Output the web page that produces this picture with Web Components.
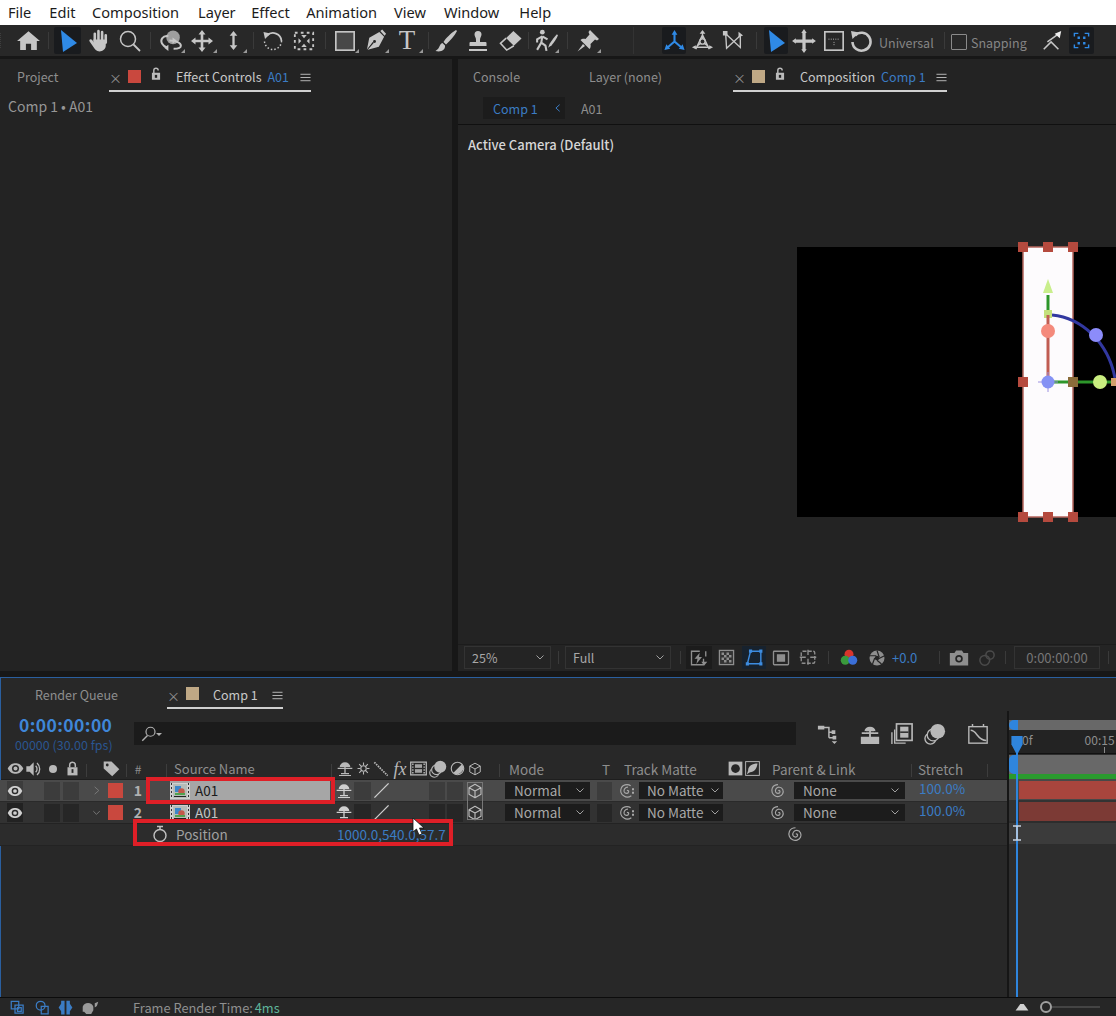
<!DOCTYPE html>
<html>
<head>
<meta charset="utf-8">
<title>Comp 1</title>
<style>
html, body { margin: 0; padding: 0; background: #161616; overflow: hidden; }
</style>
</head>
<body>
<ae-app>
    <ae-menubar>
        <span style="margin-left:8px">File</span><span style="margin-left:18px">Edit</span><span style="margin-left:16.500px">Composition</span><span style="margin-left:19px">Layer</span><span style="margin-left:15.500px">Effect</span><span style="margin-left:16.400px">Animation</span><span style="margin-left:17px">View</span><span style="margin-left:18px">Window</span><span style="margin-left:20px">Help</span>
    </ae-menubar>
    <ae-toolbar></ae-toolbar>
    <ae-workspace>
        <ae-effect-panel slot="left"></ae-effect-panel>
        <ae-comp-panel slot="right"></ae-comp-panel>
    </ae-workspace>
    <ae-timeline></ae-timeline>
    <ae-statusbar></ae-statusbar>
</ae-app>

<script>
const FONT = '"Noto Sans CJK KR", "Noto Sans", sans-serif'
const BLUE = '#3b7cc4'

const ICONS = {
    grip: '<path d="M2 4v16M5 4v16" stroke="currentColor" stroke-width="1" stroke-dasharray="1 1" fill="none"/>',
    home: '<path fill="currentColor" d="M12 3 23 12.5H20V21H14.5V15H9.5V21H4V12.5H1Z"/>',
    arrow: '<path fill="currentColor" d="M5 1 21 14 7 23Z"/>',
    hand: '<path fill="currentColor" d="M6 11h12v6c0 3-3 5.500-6 5.500-3 0-4.500-2-6-4.500L2.500 13c-1-2 1-3 2.500-1.500L6.500 14Z"/><path stroke="currentColor" stroke-width="2.500" stroke-linecap="round" fill="none" d="M7.500 13V5.500M11 12V3M14.500 12V4M18 14V7"/>',
    zoom: '<circle cx="10" cy="10" r="7.500" stroke="currentColor" stroke-width="1.500" fill="none"/><path stroke="currentColor" stroke-width="1.800" d="M15.500 15.500 22 22"/>',
    orbit: '<circle cx="13.500" cy="9" r="6.500" fill="currentColor" opacity=".75"/><path stroke="currentColor" stroke-width="1.900" fill="none" d="M8 19C3 17 1 13 3 10 4.500 8 7 7.500 9 8M10 12c5 0 11 2 11 5 0 2-3 3-7 3"/><path fill="currentColor" d="M9 16v6l-4-3zM13 9v6l4-3z"/>',
    move: '<path fill="currentColor" d="M12 1 15.500 5.500H13.300V10.700H18.500V8.500L23 12 18.500 15.500V13.300H13.300V18.500H15.500L12 23 8.500 18.500H10.700V13.300H5.500V15.500L1 12 5.500 8.500V10.700H10.700V5.500H8.500Z"/>',
    dolly: '<path fill="currentColor" d="M12 2 16 7H13.200V17H16L12 22 8 17H10.800V7H8Z"/>',
    rotate: '<path stroke="currentColor" stroke-width="1.800" fill="none" d="M6 6.500A8.500 8.500 0 0 1 20.500 12"/><path stroke="currentColor" stroke-width="1.500" stroke-dasharray="1.500 2" fill="none" d="M20.500 12A8.500 8.500 0 0 1 3.500 12"/><path fill="currentColor" d="M2.500 3 9.500 4.500 4 10Z"/>',
    anchor: '<path stroke="currentColor" stroke-width="2" stroke-dasharray="3 3.500" fill="none" d="M2 3H22V21H2Z"/><path fill="currentColor" d="M12 9 9 5.500H15ZM12 15 9 18.500H15ZM9 12 6 9V15ZM15 12 18 9V15Z"/>',
    rect: '<rect x="2" y="2" width="20" height="20" fill="#484848" stroke="currentColor" stroke-width="1.800"/>',
    pen: '<path fill="currentColor" d="M16 3 21 8 15.500 18.500 3 22 5.500 9ZM3 22 10 14.500 9 13.500Z"/><circle cx="11" cy="13" r="1.500" fill="#262626"/><path stroke="#262626" d="M3 22 10 14"/><path fill="currentColor" d="M17 2 19 .5 23 5 21.500 7Z"/>',
    brush: '<path fill="currentColor" d="M22 1C17 4 12 9 9.500 13L12 15.500C16 12 20.500 7 23 2ZM8.500 14C5 15 6.500 19 1.500 22 7 23.500 11.500 21 11 16.500Z"/>',
    stamp: '<path fill="currentColor" d="M12 2a3.500 3.500 0 0 1 3.500 3.500c0 2-1.500 3-1.500 5.500v2h5.500a1 1 0 0 1 1 1v3H3.500v-3a1 1 0 0 1 1-1H10v-2c0-2.500-1.500-3.500-1.500-5.500A3.500 3.500 0 0 1 12 2ZM3 20H21V22H3Z"/>',
    eraser: '<path fill="currentColor" d="M15 2 23.500 10 15.500 17.500 7.500 9.500Z"/><path stroke="currentColor" stroke-width="1.600" fill="none" d="M7.500 9.500 1.500 15 8 22 15.500 17.500"/>',
    roto: '<circle cx="8" cy="4" r="2.300" fill="currentColor"/><path stroke="currentColor" stroke-width="2" fill="none" d="M8 8 7 14 3 21M7 14l4 3 1 5M8 8 3 11V14M8 8 13 11"/><path fill="currentColor" d="M22 6C20 8 17 12 15 15L13.500 19 17 16.500C19 14 22 10 23 7Z"/>',
    pin: '<path fill="currentColor" d="M14 1 23 10 21 11.500 19 10.500 14.500 15C15 17.500 14.500 19 13.500 20L4.500 11C5.500 10 7.500 9.500 9.500 10L13.500 5.500 12.500 3Z"/><path fill="currentColor" d="M7 15 1.500 22.500 9 17Z"/>',
    axisL: '<path stroke="currentColor" stroke-width="2.200" fill="none" d="M12 13V5M12 13 5 19M12 13 19 19"/><path fill="currentColor" d="M12 1 15 6H9ZM1.500 22 3.500 16 7.500 20.500ZM22.500 22 20.500 16 16.500 20.500Z"/>',
    axisW: '<path stroke="currentColor" stroke-width="1.400" fill="none" d="M12 4V10M4 19H20M10 15 6 18M14 15 18 18M5 21 12 6 19 21"/><circle cx="12" cy="13" r="2.800" fill="none" stroke="currentColor" stroke-width="1.500"/><path fill="currentColor" d="M12 1 15 5H9ZM1 19 5 17V21ZM23 19 19 17V21Z"/>',
    axisV: '<path stroke="currentColor" stroke-width="1.500" fill="none" d="M4 4 20 19V6L5 20 4 4"/><path fill="currentColor" d="M1 1H6V6H1ZM18 2 23 6 18 8Z"/>',
    plus: '<path fill="currentColor" d="M12 1 14.500 4.500H13.500V10.500H19.500V9.500L23 12 19.500 14.500V13.500H13.500V19.500H14.500L12 23 9.500 19.500H10.500V13.500H4.500V14.500L1 12 4.500 9.500V10.500H10.500V4.500H9.500Z"/>',
    box: '<rect x="2" y="2" width="20" height="20" fill="none" stroke="currentColor" stroke-width="1.800"/><path stroke="currentColor" stroke-dasharray="1 1.500" fill="none" d="M6 10H18M12 13V18"/>',
    rotate2: '<path stroke="currentColor" stroke-width="2.600" fill="none" d="M6 6.500A9 9 0 1 1 3.500 13"/><path fill="currentColor" d="M2 2 10 3.500 3.500 10Z"/>',
    snap: '<path stroke="currentColor" stroke-width="1.700" fill="none" d="M3 21 11 13 19 21M7 13 18 5"/><path fill="#eee" d="M22 1 20.500 9 15 4Z"/>',
    focus: '<path stroke="currentColor" stroke-width="1.800" fill="none" d="M3 7V3H8M16 3H21V7M21 17V21H16M8 21H3V17"/><path fill="currentColor" d="M7 7h3v3H7zM14 7h3v3h-3zM7 14h3v3H7zM14 14h3v3h-3z"/>',
    lock: '<path fill="currentColor" d="M5 10H19V22H5ZM7 10V6a5 5 0 0 1 10 0H14.500a2.500 2.500 0 0 0-5 0v4Z"/><rect x="10" y="13.500" width="4" height="5" fill="#232323"/>',
    menu: '<path stroke="currentColor" stroke-width="2" d="M1 5H23M1 12H23M1 19H23"/>',
    chev: '<path stroke="currentColor" stroke-width="2" fill="none" d="M5 9 12 16 19 9"/>',
    chevR: '<path stroke="currentColor" stroke-width="2" fill="none" d="M8 4 17 12 8 20"/>',
    chevL: '<path stroke="currentColor" stroke-width="2.400" fill="none" d="M16 4 7 12 16 20"/>',
    fast: '<path stroke="currentColor" stroke-width="1.800" fill="none" d="M13 3H2V21H18V13M21 3V10"/><path fill="currentColor" d="M13 5 6 13H10L8.500 20 16 10.500H12ZM15 17H23L19 22Z"/>',
    grid: '<rect x="2" y="2" width="20" height="20" fill="#333" stroke="currentColor" stroke-width="1.800"/><path fill="currentColor" d="M5 5h3.500v3.500H5zM12 5h3.500v3.500H12zM8.500 8.500H12V12H8.500zM15.500 8.500H19V12h-3.500zM5 12h3.500v3.500H5zM12 12h3.500v3.500H12zM8.500 15.500H12V19H8.500zM15.500 15.500H19V19h-3.500z"/>',
    mask: '<path stroke="currentColor" stroke-width="1.800" fill="none" d="M7 4H20V20H3Z"/><path fill="currentColor" d="M5 2h4v4H5zM18 2h4v4h-4zM18 18h4v4h-4zM1 18h4v4H1z"/>',
    safe: '<rect x="2" y="3" width="20" height="18" rx="1" fill="none" stroke="currentColor" stroke-width="1.800"/><rect x="6.500" y="7" width="11" height="10" fill="currentColor"/>',
    guides: '<rect x="3" y="3" width="18" height="16" rx="2" fill="none" stroke="currentColor" stroke-width="1.800" stroke-dasharray="5 2"/><path stroke="currentColor" stroke-width="1.800" d="M12 1V8M12 13V21M1 11H9M15 11H23"/>',
    channels: '<circle cx="12" cy="7" r="6" fill="#d8352c"/><circle cx="7" cy="15" r="6" fill="#3a9a3c"/><circle cx="17" cy="15" r="6" fill="#3b6fd8"/>',
    aperture: '<circle cx="12" cy="12" r="10" fill="currentColor"/><path stroke="#242424" stroke-width="1.600" fill="none" d="M12 2 15 11M22 9 14 13M18 20 12 15M6 20 9 12M2 9 11 9"/><circle cx="12" cy="12" r="3" fill="#242424"/>',
    camera: '<path fill="currentColor" d="M1 6H6.500L8.500 3H15.500L17.500 6H23V21H1Z"/><circle cx="12" cy="13" r="4.500" fill="#242424"/><circle cx="12" cy="13" r="2.500" fill="currentColor"/>',
    snapshot: '<circle cx="9" cy="15" r="6.500" fill="none" stroke="currentColor" stroke-width="2"/><circle cx="16" cy="8" r="5.500" fill="none" stroke="currentColor" stroke-width="2"/>',
    search: '<circle cx="14" cy="9" r="6" fill="none" stroke="currentColor" stroke-width="1.600"/><path stroke="currentColor" stroke-width="1.800" d="M10 14 3 21"/>',
    flow: '<path stroke="currentColor" stroke-width="1.600" fill="none" d="M7 5H13V16M13 10H17M13 16H18"/><path fill="currentColor" d="M1 3H8V7H1ZM16 8H20V12H16ZM17 14H21V18H17ZM16 20H22L19 23Z"/>',
    shyBig: '<path fill="currentColor" d="M6 9a6 5 0 0 1 12 0ZM3 10H21V12H3ZM11 5H13V15H11ZM2 15H22V23H2Z"/><path stroke="#282828" d="M7 9V10M17 9V10"/>',
    shySmall: '<path fill="currentColor" d="M4 9a8 7 0 0 1 16 0ZM1 10H23V12H1ZM11 3H13V19H11ZM6 18H18V20H6Z"/><path fill="currentColor" d="M3 21H21V22.500H3Z"/>',
    film: '<rect x="1" y="3" width="22" height="18" fill="none" stroke="currentColor" stroke-width="1.800"/><rect x="7" y="6" width="10" height="12" fill="currentColor" opacity=".85"/><path stroke="currentColor" stroke-width="2" stroke-dasharray="2 2" d="M4 5V19M20 5V19"/><path stroke="#282828" stroke-width="1.800" d="M7 12H17"/>',
    filmStack: '<path stroke="currentColor" stroke-width="1.500" fill="none" d="M4 7V22H16M1 10V23"/><rect x="6" y="1" width="17" height="18" fill="none" stroke="currentColor" stroke-width="1.800"/><rect x="10" y="4" width="9" height="12" fill="currentColor"/><path stroke="#282828" stroke-width="1.600" d="M10 10H19"/>',
    blur: '<circle cx="7" cy="17" r="6" fill="none" stroke="currentColor" stroke-width="1.500"/><circle cx="10" cy="13" r="6.500" fill="#282828" stroke="currentColor" stroke-width="1.500"/><circle cx="15" cy="9" r="8" fill="currentColor"/>',
    graph: '<rect x="2" y="4" width="20" height="18" fill="none" stroke="currentColor" stroke-width="1.500"/><path stroke="currentColor" stroke-width="1.600" fill="none" d="M4 8C11 8 11 19 21 19M6 1V4M18 1V4"/>',
    eye: '<path fill="currentColor" d="M1 12C4 6 8 4.500 12 4.500S20 6 23 12C20 18 16 19.500 12 19.500S4 18 1 12Z"/><circle cx="12" cy="12" r="5" fill="#2a2a2a"/><circle cx="12" cy="12" r="2.800" fill="currentColor"/>',
    speaker: '<path fill="currentColor" d="M2 8H7L13 2V22L7 16H2Z"/><path stroke="currentColor" stroke-width="2" fill="none" d="M16 7a7 7 0 0 1 0 10M18 3a12 12 0 0 1 0 18"/>',
    dot: '<circle cx="12" cy="12" r="8" fill="currentColor"/>',
    lockH: '<path fill="currentColor" d="M4 10H20V23H4Z"/><path stroke="currentColor" stroke-width="2.400" fill="none" d="M7.500 10V6.500a4.500 4.500 0 0 1 9 0V10"/><rect x="10.500" y="13" width="3" height="6" fill="#282828"/>',
    tag: '<path fill="currentColor" d="M1 2H12L23 13 13 23 1 12Z"/><circle cx="6" cy="7" r="2" fill="#282828"/>',
    sun: '<circle cx="12" cy="12" r="5" fill="none" stroke="currentColor" stroke-width="2"/><path stroke="currentColor" stroke-width="2" d="M12 1V6M12 18V23M1 12H6M18 12H23M4 4 8 8M16 16 20 20M20 4 16 8M8 16 4 20"/>',
    dots: '<path stroke="currentColor" stroke-width="2.600" stroke-dasharray="2.400 1.400" d="M2 2 22 22"/>',
    half: '<circle cx="12" cy="12" r="10" fill="none" stroke="currentColor" stroke-width="1.800"/><path fill="currentColor" d="M19 5A10 10 0 0 1 5 19Z"/>',
    cube: '<path stroke="currentColor" stroke-width="1.700" fill="none" stroke-linejoin="round" d="M12 2 21 7V17L12 22 3 17V7ZM3 7 12 12 21 7M12 12V22"/>',
    slash: '<path stroke="currentColor" stroke-width="1.800" d="M2 22 22 2"/>',
    spiral: '<path stroke="currentColor" stroke-width="1.700" fill="none" d="M12.500 11.500c1.500-1 3 .5 2.300 2.300-1 2.400-5 2.400-6.300-.3C7 10 10 6 14 6.300c5 .4 7 5.500 5 9.700-2 4-7 5.500-11 3.500C3.500 17.500 1.500 12 3.500 7.500 5 4 8.500 2.500 12 2.500"/>',
    spiralDot: '<path stroke="currentColor" stroke-width="1.700" fill="none" d="M10.500 11.500c1.500-1 3 .5 2.300 2.300-1 2.400-5 2.400-6.300-.3C5 10 8 6 12 6.300M17 19c-3 2-8 2.500-11 .5C1.500 17.500 0 12 2 7.500 3.500 4 7 2.500 10.500 2.500c2 0 4 .5 5.500 1.500"/><path fill="currentColor" d="M18 8h3v3h-3zM18 13h3v3h-3z"/>',
    watch: '<circle cx="12" cy="14" r="8" fill="none" stroke="currentColor" stroke-width="1.900"/><path stroke="currentColor" stroke-width="2" d="M8 2H16M12 2V6"/>',
    maskBtn: '<rect x="1" y="1" width="22" height="22" fill="currentColor"/><circle cx="12" cy="12" r="7" fill="#262626"/>',
    leafBtn: '<rect x="1" y="1" width="22" height="22" fill="none" stroke="currentColor" stroke-width="1.500"/><path fill="currentColor" d="M20 4C12 4 5 8 5 15L3 21 8 18C15 18 19 12 20 4Z"/>',
    comps: '<path stroke="currentColor" stroke-width="2" fill="none" d="M2 2H14V14H2ZM8 8H21V21H8ZM12 12H18V18H12Z"/>',
    modes: '<circle cx="9" cy="9" r="7" fill="none" stroke="currentColor" stroke-width="2"/><path stroke="currentColor" stroke-width="2" fill="none" d="M10 10H21V22H10Z"/>',
    inout: '<path fill="currentColor" d="M10.500 1H5V6L1 12 5 18V23H10.500ZM13.500 1H19V6L23 12 19 18V23H13.500Z"/>',
    guy: '<path fill="currentColor" d="M1 11a8 8 0 0 1 15 0v5l-3 5H6L3 18H1ZM18 6l5-2-2 6-3 2Z"/>',
    mountain: '<path fill="currentColor" d="M1 18 9 7H15L23 18Z"/>'
}

// lays items out from left to right: each item is [from, to, html, class]
function strip(items, start = 0) {
    let x = start
    return items.map(([a, b, html, cls]) => {
        let s = `margin-left:${a - x}px;width:${b - a}px`
        x = b
        return `<span class="c ${cls || ''}" style="${s}">${html || ''}</span>`
    }).join('')
}
function ic(name, size = 20, color = '') {
    return `<ae-icon name="${name}" size="${size}" ${color ? `style="color:${color}"` : ''}></ae-icon>`
}
const BASE = `
    :host { display: block; box-sizing: border-box; font-family: ${FONT}; }
    .strip { display: flex; align-items: stretch; }
    .c { display: flex; flex: none; align-items: center; justify-content: center; white-space: nowrap; }
    .l { justify-content: flex-start; }
    .sep::after { content: ''; width: 1px; height: 60%; background: #3a3a3a; }
`

class AeElement extends HTMLElement {
    paint(css, html) {
        let root = this.shadowRoot || this.attachShadow({mode: 'open'})
        root.innerHTML = `<style>${BASE}${css}</style>${html}`
    }
}

class AeIcon extends HTMLElement {
    connectedCallback() {
        let size = this.getAttribute('size') || 20
        let root = this.attachShadow({mode: 'open'})
        root.innerHTML = `<style>:host{display:inline-flex;flex:none;line-height:0} svg{display:block}</style>
            <svg width="${size}" height="${size}" viewBox="0 0 24 24">${ICONS[this.getAttribute('name')] || ''}</svg>`
    }
}
customElements.define('ae-icon', AeIcon)

class AeApp extends AeElement {
    connectedCallback() {
        this.paint(`:host { width: 1116px; height: 1016px; display: flex; flex-direction: column; overflow: hidden; position: relative; }`, `<slot></slot>`)
    }
}
customElements.define('ae-app', AeApp)

class AeMenubar extends AeElement {
    connectedCallback() {
        this.paint(`
            :host { height: 25px; padding-bottom: 2px; background: #fff; color: #1c1c1c; font-family: "Noto Sans", sans-serif; font-size: 14.600px; display: flex; align-items: center; white-space: nowrap; flex: none; }
        `, `<slot></slot>`)
    }
}
customElements.define('ae-menubar', AeMenubar)

class AeToolbar extends AeElement {
    connectedCallback() {
        const C = '#c6c6c6'
        let t = (a, b, name, size, cls) => [a, b, ic(name, size), cls]
        let items = [
            t(0, 14, 'grip', 24, 'dim'),
            t(14, 42, 'home', 25),
            [42, 54, '', 'sep'],
            t(54, 81, 'arrow', 24, 'on'),
            t(83, 115, 'hand', 25),
            t(115, 145, 'zoom', 24),
            [145, 156, '', 'sep'],
            t(156, 186, 'orbit', 25, 'fly'),
            t(186, 218, 'move', 24, 'fly'),
            t(218, 248, 'dolly', 23, 'fly'),
            [248, 258, '', 'sep'],
            t(258, 288, 'rotate', 24),
            t(288, 320, 'anchor', 22),
            [320, 330, '', 'sep'],
            t(330, 360, 'rect', 22, 'fly'),
            t(360, 390, 'pen', 23, 'fly'),
            [390, 424, 'T', 'tee fly'],
            [424, 432, '', 'sep'],
            t(432, 460, 'brush', 24),
            t(460, 496, 'stamp', 24),
            t(496, 524, 'eraser', 23),
            [524, 532, '', 'sep'],
            t(532, 560, 'roto', 25, 'fly'),
            [560, 574, '', 'sep'],
            t(574, 602, 'pin', 24, 'fly'),
            [602, 662, '', 'far'],
            t(662, 686, 'axisL', 23, 'on'),
            t(686, 718, 'axisW', 23),
            t(718, 748, 'axisV', 22),
            [748, 764, '', 'sep'],
            t(764, 788, 'arrow', 24, 'on'),
            t(788, 820, 'plus', 26),
            t(820, 847, 'box', 22),
            t(847, 875, 'rotate2', 24),
            [875, 941, 'Universal', 'l word'],
            [941, 948, '', 'sep'],
            [950, 967, '<i class="check"></i>'],
            [971, 1034, 'Snapping', 'l word2'],
            t(1034, 1069, 'snap', 22),
            t(1069, 1094, 'focus', 19, 'on')
        ]
        this.paint(`
            :host { height: 31px; background: #282828; color: ${C}; flex: none; }
            .strip { height: 31px; padding-top: 2px; box-sizing: border-box; padding-bottom: 2px; }
            .on { background: #191b1e; color: #2f8ae6; border-radius: 2px; }
            .dim { color: #555; }
            .far { justify-content: flex-end; }
            .far::after { content: ''; width: 1px; height: 100%; background: #333; margin-right: 28px; }
            .fly { position: relative; }
            .fly::before { content: ''; position: absolute; right: 1px; bottom: 1px; border: 2px solid transparent; border-right-color: #999; border-bottom-color: #999; }
            .tee { font-family: "Liberation Serif", serif; font-size: 27px; }
            .word, .word2 { font-size: 12.500px; color: #858585; padding-top: 3px; box-sizing: border-box; }
            .word { padding-left: 4px; }
            .check { width: 16px; height: 16px; border: 1.500px solid #8a8a8a; border-radius: 1px; display: block; margin-top: 2px; box-sizing: border-box; }
        `, `<div class="strip">${strip(items)}</div>`)
    }
}
customElements.define('ae-toolbar', AeToolbar)

class AeWorkspace extends AeElement {
    connectedCallback() {
        this.paint(`
            :host { display: flex; height: 621px; padding: 3px 0 6px; background: #171717; flex: none; }
            .left { width: 452px; flex: none; display: flex; margin-right: 6px; }
            .right { flex: 1; display: flex; min-width: 0; }
            ::slotted(*) { flex: 1; min-width: 0; }
        `, `<div class="left"><slot name="left"></slot></div><div class="right"><slot name="right"></slot></div>`)
    }
}
customElements.define('ae-workspace', AeWorkspace)

// the active tab of a panel: close button, label colour, lock, title, underline
class AeTab extends AeElement {
    connectedCallback() {
        let swatch = this.getAttribute('swatch')
        let lock = this.hasAttribute('lock')
        let sub = this.getAttribute('sub')
        this.paint(`
            :host { display: flex; flex: none; width: ${this.getAttribute('w')}px; height: 33px; box-sizing: border-box; padding-top: 6px; align-items: flex-start; border-bottom: 2px solid #d0d0d0; font-size: 12.500px; color: #c8c8c8; white-space: nowrap; }
            .head { display: flex; align-items: center; flex: none; height: 24px; width: ${this.getAttribute('head')}px; }
            .x { width: 10px; text-align: center; color: #909090; font-size: 13px; margin-left: 0; }
            .sw { width: 13px; height: 13px; margin: var(--sw-top, -1px) 0 0 9px; }
            .lk { margin: -4px 0 0 8px; color: #bbb; }
            .txt { line-height: 24px; }
            .sub { color: ${BLUE}; margin-left: 6px; line-height: 24px; }
            .m { margin-left: auto; height: 24px; display: flex; align-items: center; color: #c0c0c0; }
        `, `<div class="head"><span class="x">×</span><span class="sw" style="background:${swatch}"></span>${lock ? `<span class="lk">${ic('lock', 14)}</span>` : ''}</div>
            <span class="txt"><slot></slot></span>${sub ? `<span class="sub">${sub}</span>` : ''}<span class="m">${ic('menu', 11)}</span>`)
    }
}
customElements.define('ae-tab', AeTab)

class AeEffectPanel extends AeElement {
    connectedCallback() {
        this.paint(`
            :host { background: #232323; display: flex; flex-direction: column; }
            .tabs { display: flex; height: 33px; font-size: 12.500px; color: #8e8e8e; flex: none; }
            .project { width: 109px; padding: 8px 0 0 17px; box-sizing: border-box; }
            .crumb { font-size: 14px; color: #969696; padding: 4px 0 0 8px; }
        `, `<div class="tabs"><span class="project">Project</span><ae-tab w="202" head="67" swatch="#c9483e" lock sub="A01">Effect Controls</ae-tab></div>
            <div class="crumb">Comp 1 • A01</div>`)
    }
}
customElements.define('ae-effect-panel', AeEffectPanel)

// the composition with the transform gizmo drawn in screen coordinates
class AeCompStage extends AeElement {
    connectedCallback() {
        let handles = [[1023, 247], [1048, 247], [1073, 247], [1023, 382], [1023, 517], [1048, 517], [1073, 517]]
            .map(([x, y]) => `<rect x="${x - 5}" y="${y - 5}" width="10" height="10" fill="#b54a3e"/>`).join('')
        this.paint(`
            :host { width: 319px; height: 270px; background: #000; flex: none; position: relative; }
            svg { position: absolute; left: 0; top: 0; overflow: visible; }
        `, `<svg width="319" height="270" viewBox="797 247 319 270">
            <rect x="1023" y="247" width="50" height="270" fill="#fdfbfd" stroke="#b5655c" stroke-width="1.500"/>
            ${handles}
            <path d="M1052 315C1082 318 1108 342 1115 378" stroke="#3238a0" stroke-width="3" fill="none"/>
            <path d="M1048 295V313" stroke="#2d962a" stroke-width="3"/>
            <path d="M1048 279 1053 293H1043Z" fill="#c9ee8c"/>
            <rect x="1044" y="310" width="8" height="8" fill="#c4e07c"/>
            <path d="M1048 315V377" stroke="#c05c52" stroke-width="3"/>
            <circle cx="1048" cy="331" r="7" fill="#f48a7c"/>
            <circle cx="1096" cy="335" r="7" fill="#8c8cfa"/>
            <path d="M1050 382H1116" stroke="#2d962a" stroke-width="3"/>
            <rect x="1068" y="377" width="10" height="10" fill="#8a6c3a"/>
            <rect x="1111" y="378" width="5" height="8" fill="#d4a06c"/>
            <path d="M1038 382H1058M1048 372V392" stroke="#9c90e0" stroke-width="1"/>
            <circle cx="1048" cy="382" r="6.500" fill="#8592f4"/>
            <circle cx="1100" cy="382" r="7" fill="#c9ee80"/>
        </svg>`)
    }
}
customElements.define('ae-comp-stage', AeCompStage)

class AeSelect extends AeElement {
    connectedCallback() {
        this.paint(`
            :host { display: flex; align-items: center; justify-content: space-between; box-sizing: border-box; height: 100%; background: var(--select-bg, #1c1c1c); padding: 0 var(--select-pr, 4px) var(--select-pb, 0) var(--select-pl, 9px); border: var(--select-border, none); color: #a8a8a8; font-size: var(--select-size, 13.500px); white-space: nowrap; width: 100%; }
        `, `<slot></slot>${ic('chev', 12, '#a0a0a0')}`)
    }
}
customElements.define('ae-select', AeSelect)

class AeCompPanel extends AeElement {
    connectedCallback() {
        let o = 458
        let foot = [
            [464 - o, 551 - o, '<ae-select class="sel">25%</ae-select>', 'box'],
            [555 - o, 561 - o, '', 'sep'],
            [565 - o, 671 - o, '<ae-select class="sel">Full</ae-select>', 'box'],
            [675 - o, 685 - o, '', 'sep'],
            [686 - o, 712 - o, ic('fast', 18), 'press'],
            [713 - o, 739 - o, ic('grid', 17)],
            [742 - o, 766 - o, ic('mask', 19, '#3d8ce0'), 'blue'],
            [768 - o, 794 - o, ic('safe', 18)],
            [795 - o, 821 - o, ic('guides', 18)],
            [822 - o, 834 - o, '', 'sep'],
            [836 - o, 861 - o, ic('channels', 18)],
            [864 - o, 890 - o, ic('aperture', 18)],
            [892 - o, 934 - o, '+0.0', 'l exp'],
            [934 - o, 944 - o, '', 'sep'],
            [946 - o, 972 - o, ic('camera', 20)],
            [975 - o, 999 - o, ic('snapshot', 18, '#4a4a4a')],
            [1000 - o, 1010 - o, '', 'sep'],
            [1014 - o, 1100 - o, '0:00:00:00', 'time'],
            [1105 - o, 1111 - o, '', 'sep']
        ]
        this.paint(`
            :host { background: #232323; display: flex; flex-direction: column; overflow: hidden; color: #8e8e8e; }
            .tabs { display: flex; height: 33px; font-size: 12.500px; flex: none; }
            .tabs span { padding: 8px 0 0 0; box-sizing: border-box; }
            .subtabs { display: flex; height: 32px; flex: none; align-items: center; border-bottom: 1px solid #101010; box-sizing: content-box; font-size: 12.500px; }
            .crumb-on { margin-left: 25px; width: 82px; height: 22px; background: #1c1c1c; color: ${BLUE}; display: flex; align-items: center; justify-content: space-between; padding: 0 2px 0 10px; box-sizing: border-box; }
            .crumb { margin-left: 16px; }
            .viewer { flex: 1; min-height: 0; font-size: 13px; color: #d6d6d6; }
            .label { height: 122px; padding: 10px 0 0 10px; box-sizing: border-box; font-weight: 500; }
            .stage { margin-left: 339px; }
            .foot { height: 27px; flex: none; background: #242424; padding-top: 1px; padding-bottom: 3px; box-sizing: border-box; border-top: 1px solid #1c1c1c; }
            .foot .c { height: 23px; }
            .box { --select-bg: #242424; --select-border: 1px solid #333; --select-size: 12.500px; --select-pl: 7px; --select-pb: 1px; }
            .sel { width: 100%; }
            .press { background: #1c1c1c; }
            .blue { background: #17222e; }
            .exp { color: ${BLUE}; font-size: 13px; }
            .time { border: 1px solid #333; box-sizing: border-box; color: #767676; font-size: 13px; }
        `, `<div class="tabs"><span style="margin-left:15px;width:116px">Console</span><span style="width:144px">Layer (none)</span><ae-tab w="214" head="67" swatch="#bfa885" lock sub="Comp 1">Composition</ae-tab></div>
            <div class="subtabs"><div class="crumb-on">Comp 1 ${ic('chevL', 10, BLUE)}</div><div class="crumb">A01</div></div>
            <div class="viewer"><div class="label">Active Camera (Default)</div><ae-comp-stage class="stage"></ae-comp-stage></div>
            <div class="foot strip">${strip(foot)}</div>`)
    }
}
customElements.define('ae-comp-panel', AeCompPanel)

// one row of the layer outline
class AeLayerRow extends AeElement {
    connectedCallback() {
        let n = this.getAttribute('num')
        let sel = this.hasAttribute('selected')
        let dark = '#' + (sel ? '3c3c3c' : '262626')
        let sq = `<i class="sq" style="background:${dark}"></i>`
        let footage = `<svg class="foot" width="20" height="16" viewBox="0 0 20 16"><rect width="20" height="16" fill="#cfcfcf"/><path stroke="#333" stroke-dasharray="2 2" d="M1.500 0V16M18.500 0V16"/><rect x="3" y="1" width="14" height="14" fill="#b5bcb8"/><path d="M5 3H11V9H5Z" fill="#3c86c8"/><circle cx="11.500" cy="8.500" r="3.200" fill="#c4594a"/><path d="M5 10H15V12H5Z" fill="#4fa34f"/><path d="M4 13.500H16" stroke="#222"/></svg>`
        let items = [
            [7, 23, ic('eye', 16, '#cfcfcf'), 'eye'],
            [44, 60, sq], [63, 79, sq],
            [88, 104, ic(sel ? 'chevR' : 'chev', 11, '#7c7c7c')],
            [108, 123, '<i class="swatch"></i>'],
            [130, 146, n, 'num'],
            [150, 330, `<span class="pre"></span>${footage}<span class="nm">A01</span>`, 'l name'],
            [336, 352, ic('shySmall', 16, '#cfcfcf')],
            [354, 371, sq],
            [372, 390, ic('slash', 17, '#cfcfcf'), 'sw'],
            [429, 445, sq], [447, 463, sq],
            [467, 483, ic('cube', 16, '#bdbdbd')],
            [505, 590, '<ae-select>Normal</ae-select>', 'fill'],
            [597, 612, sq],
            [618, 637, ic('spiralDot', 16, '#a8a8a8')],
            [639, 723, '<ae-select class="nm2">No Matte</ae-select>', 'fill'],
            [770, 786, ic('spiral', 16, '#a8a8a8')],
            [794, 905, '<ae-select>None</ae-select>', 'fill'],
            [919, 975, '100.0%', 'l pct']
        ]
        this.paint(`
            :host { height: 22px; background: ${sel ? '#4a4a4a' : '#323232'}; border-bottom: 1px solid ${sel ? '#2a2a2a' : '#232323'}; box-sizing: border-box; color: #bdbdbd; font-size: 14px; }
            .strip { height: 21px; }
            .c { height: 21px; }
            .eye { background: ${sel ? '#3c3c3c' : '#222'}; height: 19px; margin-top: 1px; }
            .sq { width: 100%; height: 18px; display: block; }
            .swatch { width: 15px; height: 15px; background: #c9483e; display: block; }
            .num { font-weight: 700; color: #b0b0b0; padding-bottom: 2px; box-sizing: border-box; }
            .name { background: ${sel ? '#a6a6a6' : 'transparent'}; height: 19px; margin-top: 1px; color: #1a1a1a; }
            .pre { width: 20px; height: 100%; background: ${sel ? '#4a4a4a' : 'transparent'}; flex: none; }
            .foot { flex: none; }
            .nm { margin-left: 5px; font-size: 13.500px; padding-bottom: 2px; ${sel ? '' : 'color:#c4c4c4;'} }
            .fill { height: 17px; margin-top: 2px; --select-pb: 2px; }
            .nm2 { --select-pl: 8px; --select-pr: 2px; }
            .pct { color: ${BLUE}; font-size: 13.500px; padding-bottom: 5px; box-sizing: border-box; }
        `, `<div class="strip">${strip(items)}</div>`)
    }
}
customElements.define('ae-layer-row', AeLayerRow)

class AeTimeline extends AeElement {
    connectedCallback() {
        let tools = [
            [134, 796, `<span style="margin-left:6px;display:flex;align-items:center">${ic('search', 18, '#b0b0b0')}<i class="drop"></i></span>`, 'l search'],
            [815, 840, ic('flow', 22)],
            [858, 882, ic('shyBig', 22)],
            [890, 914, ic('filmStack', 22)],
            [923, 947, ic('blur', 22)],
            [966, 990, ic('graph', 22)]
        ]
        let hi = (name, size, color) => ic(name, size, color || '#b8b8b8')
        let head = [
            [7, 23, hi('eye', 17)],
            [25, 41, hi('speaker', 16)],
            [45, 61, hi('dot', 12)],
            [64, 80, hi('lockH', 15)],
            [85, 87, '', 'bar'],
            [102, 120, hi('tag', 17)],
            [125, 127, '', 'bar'],
            [132, 144, '#', 'hash'],
            [165, 167, '', 'bar'],
            [174, 328, 'Source Name', 'l src'],
            [330, 332, '', 'bar'],
            [336, 353, hi('shySmall', 16)],
            [355, 371, hi('sun', 13)],
            [373, 389, hi('dots', 16)],
            [391, 409, '<i class="fx">fx</i>'],
            [410, 427, hi('film', 17)],
            [428, 448, hi('blur', 18)],
            [449, 465, hi('half', 15)],
            [467, 483, hi('cube', 14)],
            [498, 500, '', 'bar'],
            [509, 598, 'Mode', 'l'],
            [600, 612, 'T'],
            [624, 726, 'Track Matte', 'l'],
            [727, 743, hi('maskBtn', 15)],
            [745, 760, hi('leafBtn', 15)],
            [772, 910, 'Parent &amp; Link', 'l'],
            [910, 912, '', 'bar'],
            [918, 984, 'Stretch', 'l'],
            [986, 988, '', 'bar']
        ]
        this.paint(`
            :host { height: 320px; background: #282828; flex: none; position: relative; color: #8e8e8e; border-top: 1px solid #2a5f9f; }
            .edge { position: absolute; left: 0; top: 0; bottom: 0; width: 1px; background: #2a5f9f; }
            .tabs { display: flex; height: 33px; font-size: 12.500px; box-sizing: border-box; }
            .rq { margin-left: 35px; width: 132px; padding-top: 7px; box-sizing: border-box; }
            .tabs ae-tab { height: 31px; padding-top: 5px; --sw-top: -4px; }
            .body { display: flex; height: 286px; }
            .outline { width: 1007px; flex: none; overflow: hidden; }
            .time { display: flex; height: 46px; }
            .clock { width: 134px; flex: none; padding-left: 19px; box-sizing: border-box; color: #3f86d8; font-size: 17.500px; font-weight: 700; letter-spacing: .4px; line-height: 22px; padding-top: 3px; }
            .fps { color: #2a5590; font-size: 12.500px; font-weight: 400; margin-left: -4px; letter-spacing: 0; line-height: 16px; margin-top: 1px; }
            .tools { height: 23px; margin-top: 11px; color: #b8b8b8; }
            .tools .c { height: 23px; }
            .search { background: #1b1b1b; }
            .drop { border: 3px solid transparent; border-top-color: #b0b0b0; margin-top: 5px; margin-left: -2px; }
            .head { height: 23px; font-size: 13.500px; padding-top: 1px; box-sizing: border-box; border-bottom: 1px solid #1e1e1e; }
            .bar::after { content: ''; width: 1px; height: 13px; background: #3d3d3d; margin-top: 4px; }
            .hash { font-size: 12px; }
            .src { font-size: 13px; }
            .fx { font-family: "Liberation Serif", serif; font-size: 18px; color: #b8b8b8; line-height: 1; }
            .rows { position: relative; }
            .pos { height: 22px; background: #2c2c2c; border-bottom: 1px solid #232323; box-sizing: border-box; font-size: 13.500px; color: #a0a0a0; padding-bottom: 1px; }
            .pos .c { height: 20px; }
            .val { color: ${BLUE}; font-size: 13.500px; }
            .hl { position: absolute; border: 4px solid #df1f27; box-sizing: border-box; pointer-events: none; }
            .frame3d { position: absolute; left: 467px; top: 2px; width: 16px; height: 38px; border: 1px solid #777; box-sizing: border-box; }
            .cursor { position: absolute; left: 412px; top: 38px; }
            .graph { flex: 1; border-left: 2px solid #161616; display: flex; flex-direction: column; position: relative; min-width: 0; background: #2d2d2d; }
            .g-top { height: 9px; background: #282828; flex: none; }
            .work { height: 10px; display: flex; background: #686868; flex: none; }
            .work i, .wb i { display: block; width: 9px; background: #2f85dd; border-radius: 5px 0 0 5px; margin-right: 1px; }
            .ruler { height: 24px; background: #232323; position: relative; font-size: 12px; color: #8e8e8e; display: flex; border-bottom: 1px solid #111; padding-top: 1px; box-sizing: border-box; flex: none; }
            .ruler span { margin-left: 13px; }
            .ruler span + span { margin-left: 52px; }
            .wb { height: 19px; background: #686868; display: flex; margin-top: 1px; flex: none; }
            .green { height: 5px; background: #2a9a2e; flex: none; }
            .clip { height: 21px; display: flex; padding: 2px 0 1px 10px; box-sizing: border-box; background: #484848; flex: none; }
            .clip i { display: block; flex: 1; }
            .clip2 { padding-bottom: 0; background: #333; }
            .g3 { height: 21px; background: #3b3b3b; margin-top: 2px; flex: none; }
            .play { position: absolute; left: 7px; top: 26px; bottom: 0; width: 2px; background: #2f85dd; }
            .play::before { content: ''; position: absolute; left: -6px; top: -1px; width: 14px; height: 19px; background: #2f85dd; clip-path: polygon(10% 0, 90% 0, 90% 45%, 50% 100%, 10% 45%); }
            .ibeam { position: absolute; left: 2px; top: 114px; }
            .tick { position: absolute; left: 95px; bottom: 0; width: 1px; height: 6px; background: #8a8a8a; }
        `, `<div class="edge"></div>
            <div class="tabs"><span class="rq">Render Queue</span><ae-tab w="116" head="46" swatch="#bfa885">Comp 1</ae-tab></div>
            <div class="body">
                <div class="outline">
                    <div class="time">
                        <div class="clock">0:00:00:00<div class="fps">00000 (30.00 fps)</div></div>
                        <div class="tools strip">${strip(tools, 134)}</div>
                    </div>
                    <div class="head strip">${strip(head)}</div>
                    <div class="rows">
                        <ae-layer-row num="1" selected></ae-layer-row>
                        <ae-layer-row num="2"></ae-layer-row>
                        <div class="pos strip">${strip([
                            [150, 170, ic('watch', 18, '#c0c0c0')],
                            [176, 330, 'Position', 'l'],
                            [337, 460, '1000.0,540.0,57.7', 'l val'],
                            [786, 804, ic('spiral', 17, '#a8a8a8')]
                        ])}</div>
                        <div class="frame3d"></div>
                        <div class="hl" style="left:146px;top:-3px;width:189px;height:27px"></div>
                        <div class="hl" style="left:133px;top:39px;width:320px;height:27px"></div>
                        <svg class="cursor" width="14" height="18" viewBox="0 0 14 18"><path d="M1 0V14L4.500 11 7 17 10 16 7.500 10H12Z" fill="#fff" stroke="#111" stroke-width=".8"/></svg>
                    </div>
                </div>
                <div class="graph">
                    <div class="g-top"></div>
                    <div class="work"><i></i></div>
                    <div class="ruler"><span>0f</span><span>00:15</span><b class="tick"></b></div>
                    <div class="wb"><i></i></div>
                    <div class="green"></div>
                    <div class="clip"><i style="background:#a8453d"></i></div>
                    <div class="clip clip2"><i style="background:#7c3a35"></i></div>
                    <div class="g3"></div>
                    <div class="play"></div>
                    <svg class="ibeam" width="12" height="16" viewBox="0 0 12 16"><path d="M2 1H10M2 15H10M6 1V15" stroke="#c9d4e2" stroke-width="1.500"/></svg>
                </div>
            </div>`)
    }
}
customElements.define('ae-timeline', AeTimeline)

class AeStatusbar extends AeElement {
    connectedCallback() {
        let items = [
            [9, 26, ic('comps', 15, '#3b7cc4')],
            [33, 51, ic('modes', 15, '#3b7cc4')],
            [57, 73, ic('inout', 15, '#3b7cc4')],
            [81, 99, ic('guy', 17, '#9a9a9a')],
            [133, 400, 'Frame Render Time:&nbsp;<span class="ms">4ms</span>', 'l stat'],
            [1014, 1030, ic('mountain', 14, '#d0d0d0')],
            [1040, 1052, '<i class="knob"></i>'],
            [1052, 1100, '<i class="track"></i>']
        ]
        this.paint(`
            :host { height: 19px; flex: 1; background: #262626; border-top: 1px solid #0c0c0c; color: #909090; font-size: 12.800px; }
            .strip { height: 18px; }
            .stat { padding-top: 1px; box-sizing: border-box; }
            .ms { color: #5fb59b; margin-left: -1px; }
            .knob { width: 8px; height: 8px; border: 2px solid #a0a0a0; border-radius: 50%; display: block; }
            .track { width: 100%; height: 2px; background: #444; display: block; }
        `, `<div class="strip">${strip(items)}</div>`)
    }
}
customElements.define('ae-statusbar', AeStatusbar)
</script>
</body>
</html>
